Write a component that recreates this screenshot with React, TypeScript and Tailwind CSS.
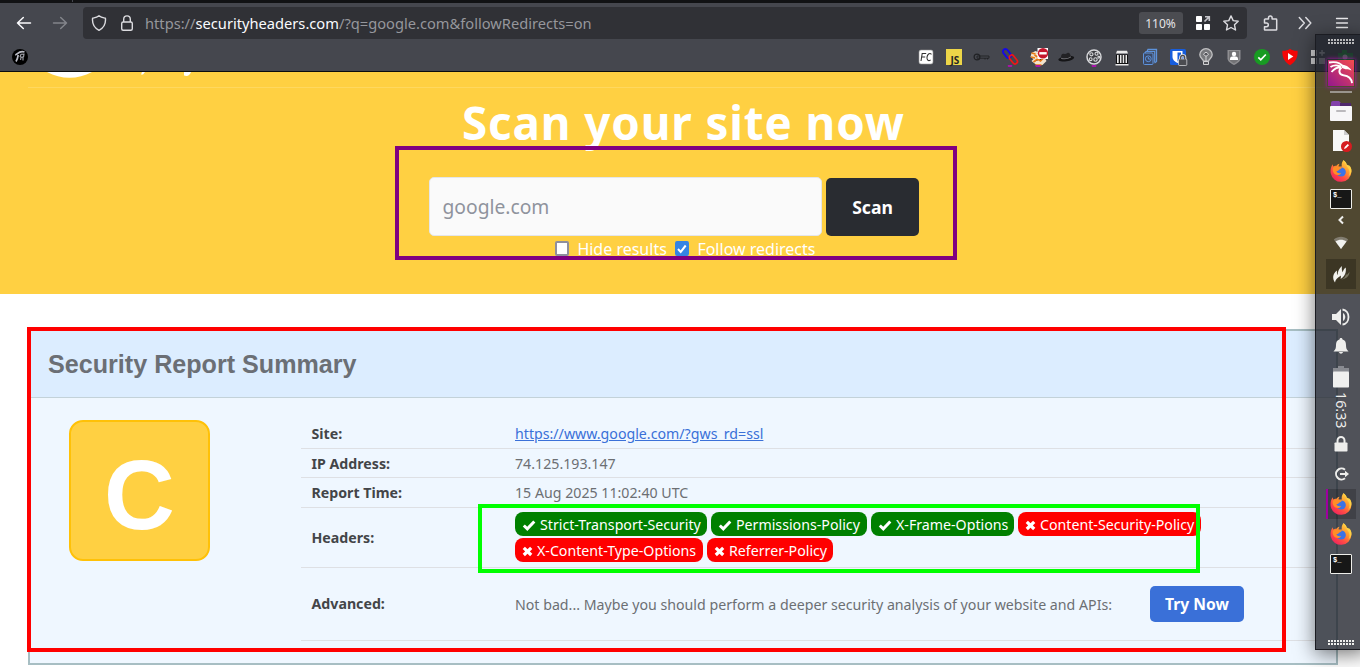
import React from "react";

type IconProps = { className?: string };

const Firefox = ({ className = "" }: IconProps) => (
  <svg viewBox="0 0 22 22" className={"block h-[22px] w-[22px] shrink-0 " + className}>
    <defs>
      <linearGradient id="fxBody" x1="0.85" y1="0.05" x2="0.2" y2="0.95">
        <stop offset="0" stopColor="#ffdf45" />
        <stop offset="0.4" stopColor="#ff9330" />
        <stop offset="0.7" stopColor="#ff4a45" />
        <stop offset="1" stopColor="#f0245e" />
      </linearGradient>
    </defs>
    <path d="M13.5.2c2 1.300 3 2.900 3.300 4.500 1 .3 1.800 1 2.300 2 .3-.5.300-1 .2-1.500 1.500 2 2.300 4.300 2.200 6.600A10.500 10.500 0 0 1 .7 13.300C.2 9.900 1 6.700 2.700 4.300c0 1 .3 1.600.6 2.100 1-.6 2-.8 3.100-.6C7.400 4.500 8.500 4 9.600 3.800c-.8.900-1.100 1.800-1 2.600h3.200c-.4-2.200.1-4.500 1.700-6.200Z" fill="url(#fxBody)" />
    <path d="M12.800.5c3.200 2.500 3.500 5.200 5.200 7.400 2.300 3.200 1.700 7-.2 9.200 4.600-3.200 4.600-9 1.300-11.500-.5-.6-1.400-.9-2.300-.9C16.300 3 15.200 1.400 13.500.2Z" fill="#ffd84a" opacity=".8" />
    <circle cx="11.200" cy="12" r="4.600" fill="#3b73e8" />
    <path d="M3 7.700c1.700-1.500 3.900-1.500 5.700-.8 1 .4 2.300.3 3.300.6-.2 1.200-1.900 1.700-2.900 2.200-.7 1-1.600 1.500-3 1.300 1.200 2.200 3.200 2.800 5.200 1.700-1.200 2.800-5.300 3.200-7.500.3C2.700 11.400 2.400 9.500 3 7.700Z" fill="#ff8e27" />
  </svg>
);

const Terminal = () => (
  <div className="h-[20px] w-[22px] rounded-[1px] border border-[#eeeeea] bg-[#171717] pl-[2px] font-['Liberation_Mono'] text-[7px] leading-[11px] font-bold text-white">
    $_
  </div>
);

const Grip = ({ className = "" }: IconProps) => (
  <svg viewBox="0 0 26 5" className={"block h-[5px] w-[26px] " + className}>
    {[0, 3, 6, 9, 12, 15, 18, 21, 24].map((x) => (
      <g key={x} fill="currentColor">
        <rect x={x} y="0" width="2" height="2" />
        <rect x={x} y="3" width="2" height="2" />
      </g>
    ))}
  </svg>
);

const Slot = ({ className = "", children }: { className?: string; children: React.ReactNode }) => (
  <div className={"flex w-[30px] shrink-0 items-center justify-center " + className}>{children}</div>
);

const Ext = ({ children }: { children: React.ReactNode }) => (
  <svg viewBox="0 0 20 20" className="block h-[20px] w-[20px]">{children}</svg>
);

function Toolbar() {
  return (
    <div className="flex h-[40px] items-center">
      <svg viewBox="0 0 16 16" fill="none" stroke="#fbfbfe" strokeWidth="1.500" strokeLinecap="round" strokeLinejoin="round" className="ml-[16px] h-[16px] w-[16px]">
        <path d="M14.500 8H1.500M7.300 2.500 1.500 8l5.800 5.500" />
      </svg>
      <svg viewBox="0 0 16 16" fill="none" stroke="#83858b" strokeWidth="1.500" strokeLinecap="round" strokeLinejoin="round" className="ml-[20px] h-[16px] w-[16px]">
        <path d="M1.500 8h13M8.700 2.500 14.500 8l-5.800 5.500" />
      </svg>
      <div className="ml-[15px] flex h-[32px] w-[1164px] items-center rounded-[4px] bg-[#303136]">
        <svg viewBox="0 0 16 16" fill="none" stroke="#dcdce0" strokeWidth="1.400" strokeLinejoin="round" className="ml-[8px] h-[16px] w-[16px]">
          <path d="M8 .8c2 1.700 4.300 2 6.400 2.400C15 8.700 12.600 13 8 15.300 3.400 13 1 8.700 1.600 3.200 3.700 2.800 6 2.500 8 .8Z" />
        </svg>
        <svg viewBox="0 0 16 16" fill="none" stroke="#dcdce0" strokeWidth="1.400" className="ml-[12px] h-[16px] w-[16px]">
          <rect x="2.700" y="7" width="10.600" height="8.300" rx="1.500" />
          <path d="M4.700 7V4.200a3.300 3.300 0 0 1 6.600 0V7" />
        </svg>
        <div className="ml-[10px] font-['Noto_Sans'] text-[14.670px] leading-[20px] whitespace-nowrap text-[#96979c]">
          https://<span className="text-[#fbfbfe]">securityheaders.com</span>/?q=google.com&amp;followRedirects=on
        </div>
        <div className="mr-[12px] ml-auto h-[22px] w-[44px] rounded-[3px] bg-[#4b4c51] pr-[1px] text-center font-['Noto_Sans'] text-[12px] leading-[23px] text-[#e4e4e6]">
          110%
        </div>
        <svg viewBox="0 0 16 16" className="mr-[12px] h-[16px] w-[16px]">
          <g fill="#fff">
            <rect x="1" y="1" width="6" height="6" rx=".8" />
            <rect x="1" y="9" width="6" height="6" rx=".8" />
            <rect x="9" y="9" width="6" height="6" rx=".8" />
          </g>
          <path d="M9.500 6.500 14 2M10 1.700h4.300V6" fill="none" stroke="#c5c5ca" strokeWidth="1.600" />
        </svg>
        <svg viewBox="0 0 16 16" fill="none" stroke="#dcdce0" strokeWidth="1.400" strokeLinejoin="round" className="mr-[8px] h-[16px] w-[16px]">
          <path d="m8 .9 2.200 4.700 5 .6-3.700 3.600 1 5.200L8 12.500 3.500 15l1-5.200L.8 6.200l5-.6Z" />
        </svg>
      </div>
      <svg viewBox="0 0 16 16" fill="none" stroke="#dcdce0" strokeWidth="1.500" strokeLinejoin="round" className="ml-[16px] h-[16px] w-[16px]">
        <path d="M1.500 8V4.700a.7.7 0 0 1 .7-.7h3.300V2.700a1.800 1.800 0 0 1 3.600 0V4H13a.7.7 0 0 1 .7.700v9.700a.7.7 0 0 1-.7.700H2.200a.7.7 0 0 1-.7-.7v-2.700h2a1.800 1.800 0 0 0 0-3.700Z" />
      </svg>
      <svg viewBox="0 0 16 16" fill="none" stroke="#dcdce0" strokeWidth="1.500" strokeLinecap="round" strokeLinejoin="round" className="ml-[18px] h-[16px] w-[16px]">
        <path d="m2.300 2.500 5 5.500-5 5.500M8.800 2.500l5 5.500-5 5.500" />
      </svg>
      <svg viewBox="0 0 16 16" fill="none" stroke="#e8e8ea" strokeWidth="1.300" strokeLinecap="round" className="ml-[21px] h-[16px] w-[16px]">
        <path d="M2.500 3.500h11M2.500 8h11M2.500 12.500h11" />
      </svg>
    </div>
  );
}

function Extensions() {
  return (
    <div className="flex h-[28px] items-center">
      <svg viewBox="0 0 16 16" className="ml-[12px] h-[16px] w-[16px]">
        <circle cx="8" cy="8" r="8" fill="#000" />
        <path d="M3.200 6c1.200-.2 2.500-1.800 4-2.600 2-.9 3.800-.9 5.300-.4M4 12.500c1-1.500 1.700-3.500 2.200-6.500" fill="none" stroke="#b9bbc4" strokeWidth="1.700" />
        <path d="M8 8 9 5.200l3-.2-.4 2.700-2.600.5-.4 2.800M11 8v3.500" fill="none" stroke="#a3a5ad" strokeWidth="1.100" />
      </svg>
      <div className="ml-[888px] flex gap-[8px]">
        <Ext>
          <rect x="3" y="3" width="14" height="14" rx="2" fill="#fff" stroke="#999" strokeWidth=".6" />
          <path d="M5 14 6.200 6.500h4M5.500 10h3.700M15.500 7.300c-2-2-4.200.2-4.500 2.800-.4 3 1.600 4.400 3.600 2.700" fill="none" stroke="#333" strokeWidth="1.100" />
        </Ext>
        <Ext>
          <rect x="2" y="2" width="16" height="16" fill="#edd648" />
          <text x="6.500" y="16.800" fontFamily="Noto Sans" fontWeight="700" fontSize="10" fill="#252525">JS</text>
        </Ext>
        <Ext>
          <circle cx="5" cy="10" r="2.900" fill="none" stroke="#202124" strokeWidth="1.200" />
          <path d="M5 9h12v2.200H5ZM13 11v1.500M15.500 11v1.500" fill="none" stroke="#202124" strokeWidth=".9" />
        </Ext>
        <Ext>
          <rect x="4.500" y="1.500" width="5" height="10" rx="2.500" fill="none" stroke="#1508e8" strokeWidth="1.900" transform="rotate(-38 7 6.500)" />
          <rect x="11" y="7.500" width="4.800" height="10" rx="2.400" fill="none" stroke="#f01616" strokeWidth="1.700" transform="rotate(-38 13.400 12.500)" />
          <path d="M7.800 18h4.400v1.500L10 21l-2.200-1.500Z" fill="#a813a8" />
        </Ext>
        <Ext>
          <g transform="translate(1.500 0)">
            <path d="M2 6 6 4l7 3 4 7-4 4H7l-5-4 2-2-3-2Z" fill="#f3e3cc" />
            <path d="m2 6 4 1M1.500 10l4 1M4 15l4-3 3 2 3-3M6 18l6 0M5 8l3 2" stroke="#e87912" strokeWidth="1.600" />
            <rect x="8" y="1" width="12" height="11" fill="#fff" />
            <circle cx="13.500" cy="6.300" r="5.200" fill="#c5172e" />
            <rect x="9.800" y="5.100" width="7.400" height="2.400" fill="#fff" />
          </g>
          <path d="M7.500 18h5v1.500L10 21l-2.500-1.500Z" fill="#a813a8" />
        </Ext>
        <Ext>
          <g transform="rotate(-8 10 10)">
            <ellipse cx="10" cy="11.700" rx="8" ry="2.600" fill="#151517" />
            <path d="M5 11c0-3 .8-5 3-4.500 1.500.4 2.300.4 4-.3 2-.4 2.800 2 3 4.800Z" fill="#222225" />
            <path d="M5 10.600c3 1.400 7 1.300 10 0" stroke="#6e6e73" fill="none" />
          </g>
        </Ext>
        <Ext>
          <circle cx="10" cy="10" r="7" fill="#3c3d42" stroke="#d7d8db" strokeWidth="1.500" />
          <g fill="#3c3d42" stroke="#d7d8db" strokeWidth="1.100"><circle cx="7.400" cy="7.300" r="1.600" /><circle cx="12.500" cy="6.800" r="1.500" /><circle cx="6.700" cy="12.200" r="1.400" /><circle cx="11.500" cy="12.500" r="1.700" /><circle cx="14.800" cy="10.200" r=".9" /></g>
          <path d="M7.700 18h4.600v1.500L10 21l-2.300-1.500Z" fill="#a813a8" />
        </Ext>
        <Ext>
          <path d="M4 7.500h12v9.500H4Z" fill="#111" />
          <path d="M4 6.500 5 3.700h10l1 2.800ZM3.500 17h13v1.500h-13ZM5 8h1.700v8H5ZM8 8h1.500v8H8ZM10.700 8h1.500v8h-1.500ZM13.500 8H15v8h-1.500Z" fill="#e8e8e8" />
        </Ext>
        <Ext>
          <path d="M7 4.500 8 2.500h8.500v12L14.500 16" fill="none" stroke="#5e93dc" strokeWidth="1.300" />
          <path d="M5 6 6 4.500h8.700V15" fill="none" stroke="#5e93dc" strokeWidth="1.200" />
          <rect x="3.500" y="6" width="9.500" height="11.500" rx="1" fill="#3c4a66" stroke="#5e93dc" />
          <circle cx="8.300" cy="11.800" r="2.900" fill="none" stroke="#5e93dc" /><path d="M8.300 10v2h1.800" fill="none" stroke="#5e93dc" />
        </Ext>
        <Ext>
          <rect x="2" y="2" width="16" height="16" rx="1.500" fill="#175ddc" />
          <path d="M4.500 4h10v6c0 3-2.500 4.700-5 6-2.500-1.300-5-3-5-6Z" fill="#fff" /><path d="M9.500 5.500h3.500v5c0 1.700-1.700 3-3.500 4Z" fill="#175ddc" />
          <path d="M12.500 12.500v-2a2.200 2.200 0 0 1 4.400 0v2" fill="none" stroke="#e4e4e6" strokeWidth="2.800" />
          <rect x="10.500" y="12" width="8.300" height="6.500" rx="1" fill="#4b4c51" stroke="#e4e4e6" strokeWidth=".7" /><path d="M12.700 12.500v-2a2 2 0 0 1 4 0v2" fill="none" stroke="#4b4c51" strokeWidth="1.300" />
        </Ext>
        <Ext>
          <path d="M7.500 14.200C7.300 12 3.800 11 3.800 7.800a6.200 6.200 0 0 1 12.400 0c0 3.200-3.500 4.200-3.700 6.400Z" fill="#77787b" stroke="#c0c0c2" strokeWidth="1.300" />
          <path d="m7.500 7.500 2.500 1.800 2.500-1.800L11 5.500H9ZM10 9v5M7.500 14.500h5v3h-5Z" fill="#55565b" stroke="#d0d0d2" strokeWidth="1" />
        </Ext>
        <Ext>
          <path d="M3.500 3h13v8.500c0 3-3.500 5-6.500 6.500-3-1.500-6.500-3.500-6.500-6.500Z" fill="#8e8e91" />
          <path d="M5 4h10v7c0 2.500-2.700 4.300-5 5.500-2.300-1.200-5-3-5-5.500Z" fill="#737376" />
          <circle cx="10" cy="7" r="2.200" fill="#fff" /><path d="M6 13v-1.500c0-3 8-3 8 0V13Z" fill="#fff" />
        </Ext>
        <Ext>
          <circle cx="10" cy="10" r="8" fill="#189b22" /><path d="m6.300 10.300 2.500 2.500 5-5.300" fill="none" stroke="#fff" strokeWidth="1.700" />
        </Ext>
        <Ext>
          <path d="M10 1.800C12 3.500 15 4 17.600 3.800c.5 6.200-2.200 11.400-7.600 14.400C4.600 15.200 1.900 10 2.400 3.800 5 4 8 3.500 10 1.800Z" fill="#f40707" /><path d="m8 6 5.300 3.500L8 13Z" fill="#fff" />
        </Ext>
        <Ext>
          <path d="M3 3h6v6H3Zm0 8h6v6H3Zm8 0h6v6h-6ZM13.300 3h1.500v2h2v1.700h-2v2h-1.500v-2h-2V5h2Z" fill="#d8d8da" />
        </Ext>
        <Ext>
          <path d="M2 6h4V3h5v3h6v12H2Z" fill="#0aa82e" /><circle cx="9" cy="10" r="2.500" fill="#fff" />
        </Ext>
      </div>
    </div>
  );
}

const Row = ({ label, className, labelClass = "", children }: { label: string; className: string; labelClass?: string; children: React.ReactNode }) => (
  <div className={"flex items-center border-b border-[#dee0e4] " + className}>
    <div className={"w-[204px] shrink-0 pl-[10.500px] font-bold text-[#434548] " + labelClass}>{label}</div>
    <div className="flex-1 pl-[10px]">{children}</div>
  </div>
);

const Pill = ({ ok, className, children }: { ok?: boolean; className: string; children: string }) => (
  <div className={"flex h-[24px] shrink-0 items-center rounded-[8px] pt-[1px] pl-[7px] whitespace-nowrap text-white " + (ok ? "bg-[#008000] " : "bg-[#ff0000] ") + className}>
    {ok ? (
      <svg viewBox="0 0 14 12" className="mr-[4px] h-[12px] w-[14px] shrink-0"><path d="m1.800 6.500 3.500 3.300 7-7.300" fill="none" stroke="#fff" strokeWidth="3" /></svg>
    ) : (
      <svg viewBox="0 0 11 12" className="mr-[4px] h-[12px] w-[11px] shrink-0"><path d="m1.800 2.800 7.400 7.200M9.200 2.800 1.800 10" fill="none" stroke="#fff" strokeWidth="3.200" /></svg>
    )}
    <span>{children}</span>
  </div>
);

function Report() {
  return (
    <div className="mt-[35px] ml-[28px] h-[336px] w-[1310px] border-2 border-[#a7bec3] bg-[#eff7ff]">
      <div className="flex h-[67px] items-center border-b border-[#c3d2d9] bg-[#dcedff] pt-[2px] pl-[18px] font-['Liberation_Sans'] text-[25.140px] font-bold text-[#6b6f75]">
        Security Report Summary
      </div>
      <div className="flex font-['Noto_Sans'] text-[14.190px] leading-[21px] text-[#6c6f73]">
        <div className="mt-[22px] ml-[39px] flex h-[141px] w-[141px] shrink-0 items-center justify-center rounded-[14px] border-2 border-[#ffc107] bg-[#ffd042] pt-[8px] font-['Liberation_Sans'] text-[98px] leading-[98px] font-bold text-white">
          C
        </div>
        <div className="ml-[91px] w-[1017px] pt-[21px]">
          <Row label="Site:" className="h-[30px]">
            <span className="text-[#3a70d8] underline">https://www.google.com/?gws_rd=ssl</span>
          </Row>
          <Row label="IP Address:" className="h-[29px] pt-[1px]">74.125.193.147</Row>
          <Row label="Report Time:" className="h-[30px]">15 Aug 2025 11:02:40 UTC</Row>
          <Row label="Headers:" className="h-[60px]">
            <div className="mb-[1px] flex flex-col gap-[2px]">
              <div className="flex gap-[4px]">
                <Pill ok className="w-[192px]">Strict-Transport-Security</Pill>
                <Pill ok className="w-[156px]">Permissions-Policy</Pill>
                <Pill ok className="w-[143px]">X-Frame-Options</Pill>
                <Pill className="w-[183px]">Content-Security-Policy</Pill>
              </div>
              <div className="flex gap-[4px]">
                <Pill className="w-[188px]">X-Content-Type-Options</Pill>
                <Pill className="w-[126px]">Referrer-Policy</Pill>
              </div>
            </div>
          </Row>
          <Row label="Advanced:" className="h-[73px]" labelClass="pb-[2px]">
            <div className="flex items-center">
              <span className="w-[635px] whitespace-nowrap">Not bad... Maybe you should perform a deeper security analysis of your website and APIs:</span>
              <button className="h-[36px] w-[94px] rounded-[5px] bg-[#3a70d8] pt-[1px] text-[15.700px] font-bold text-white">Try Now</button>
            </div>
          </Row>
        </div>
      </div>
    </div>
  );
}

function Dock() {
  return (
    <div className="absolute top-[34px] left-[1315px] flex h-[616px] w-[52px] flex-col items-start border border-[#1b1c22] bg-[rgba(33,35,44,0.79)] pl-[10px] text-[#eeeeec] shadow-[0_4px_20px_rgba(0,0,0,0.55)]">
      <Slot className="h-[12px]"><Grip className="text-[#b8b8ba]" /></Slot>
      <Slot className="mt-[12px] h-[28px]">
        <svg viewBox="0 0 28 28" className="h-[28px] w-[28px] shadow-[0_0_4px_#b010b0]">
          <defs><linearGradient id="kali" x1="0" y1="1" x2="1" y2="0"><stop offset="0" stopColor="#93188e" /><stop offset="1" stopColor="#f44c4e" /></linearGradient></defs>
          <rect x="1" y="1" width="26" height="26" fill="url(#kali)" />
          <path d="M2 3.500c6-1 11.500.3 14 4M3.500 8c3-2 7-2 10.500-.5M4.500 13c2.500-3 5.500-4.700 9.500-5M14.500 8.500c-3.500 3-2.500 7 2 7.700 5 .6 8 2.300 8.500 8" fill="none" stroke="#fff" strokeWidth="1.900" />
          <path d="M14 5.500c4 .3 8.500 2 10.500 6-2.500-1.300-4-1.500-6-1.300L15 9Z" fill="#fff" />
        </svg>
      </Slot>
      <Slot className="mt-[4px] h-[2px]"><div className="h-[2px] w-[22px] bg-[#99958c]" /></Slot>
      <Slot className="mt-[7px] h-[22px]">
        <svg viewBox="0 0 22 22" className="h-[22px] w-[22px]"><path d="M1 9V3q0-2 2-2h6l2 2h10v6Z" fill="#8240ab" /><path d="M10 3h11v3H10Z" fill="#4f286d" /><rect y="6" width="22" height="15" rx="1" fill="#f7f6f8" /><rect x="6" y="10" width="10" height="2" rx="1" fill="#bbb9bd" /></svg>
      </Slot>
      <Slot className="mt-[8px] h-[22px]">
        <svg viewBox="0 0 22 22" className="h-[22px] w-[22px]"><path d="M3 0h11l5 5v16H3Z" fill="#f8f8f7" /><path d="M14 0v5h5" fill="#ccc" /><circle cx="16.500" cy="16.500" r="5.500" fill="#d51c20" /><path d="m14 19 .7-2 3-3 1.300 1.300-3 3Z" fill="#fff" /></svg>
      </Slot>
      <Slot className="mt-[7px] h-[24px]"><Firefox /></Slot>
      <Slot className="mt-[5px] h-[22px]"><Terminal /></Slot>
      <Slot className="mt-[5px] h-[10px]"><svg viewBox="0 0 8 10" className="h-[10px] w-[8px]"><path d="M6 1.500 2.500 5 6 8.500" fill="none" stroke="#eeeeec" strokeWidth="2" /></svg></Slot>
      <Slot className="mt-[10px] h-[16px]"><svg viewBox="0 0 16 16" className="h-[16px] w-[16px]"><path d="M.8 4.500C5 .8 11 .8 15.200 4.500L8 14Z" fill="#817c70" /><path d="M2.500 6.500c3.500-2.500 7.500-2.500 11 0L8 14Z" fill="#f2f2ef" /></svg></Slot>
      <Slot className="mt-[8px] h-[30px] bg-black/25">
        <svg viewBox="0 0 18 18" className="mb-[1px] h-[18px] w-[18px]">
          <path d="M9 14.500c3-.8 5-3 5-6.500 0 1 .5 1.500.7 2C16 9 17 7.800 17.500 6.500c0 5-3.500 7.500-8.500 8Z" fill="#77745f" />
          <path d="M3 17.500C.2 13.500.5 9 5 5.500c-.3 2 0 3.500.7 4.500C5.500 6.500 7 3.500 10 1c-.6 3 0 5 .8 6.300C11 5.500 12 3.800 13.700 2.500c.8 4.500-.7 9-5.200 11.500C9 12.500 9 11.500 8.700 10.500 8 12 4 12.500 3 17.500Z" fill="#f2f2ee" />
        </svg>
      </Slot>
      <Slot className="mt-[19px] h-[18px]"><svg viewBox="0 0 18 18" className="h-[18px] w-[18px]"><path d="M0 6h4l5-5v16l-5-5H0Z" fill="currentColor" /><path d="M11 5c3 2 3 6 0 8Z" fill="currentColor" /><path d="M10.500 1.500c8 1 8 14 0 15" fill="none" stroke="currentColor" strokeWidth="1.800" /></svg></Slot>
      <Slot className="mt-[12px] h-[16px]"><svg viewBox="0 0 16 16" className="h-[16px] w-[16px]"><path d="M8 0c1 0 1.500.7 1.500 1.500C12 2 13 4 13 7c0 3 .5 4.500 2.500 6.500H.5C2.500 11.500 3 10 3 7c0-3 1-5 3.500-5.500C6.500.7 7 0 8 0ZM6 14h4c-.5 2.200-3.500 2.200-4 0Z" fill="currentColor" /></svg></Slot>
      <Slot className="mt-[12px] h-[22px]"><svg viewBox="0 0 16 22" className="h-[22px] w-[16px]"><path d="M5 0h6v2H5ZM0 2h16v4H0Z" fill="#898b91" /><rect y="5.500" width="16" height="16" rx=".8" fill="#f0f0ef" /></svg></Slot>
      <div className="mt-[3px] ml-[1px] flex h-[38px] w-[28px] shrink-0 items-center justify-center font-['Noto_Sans'] text-[14.300px] leading-[28px] [writing-mode:vertical-rl]">16:33</div>
      <Slot className="mt-[7px] h-[16px]"><svg viewBox="0 0 16 16" className="h-[16px] w-[16px]"><rect x="1.500" y="6.500" width="13" height="9" rx=".8" fill="currentColor" /><path d="M4.500 7V4.500a3.500 3.500 0 0 1 7 0V7" fill="none" stroke="currentColor" strokeWidth="2" /></svg></Slot>
      <Slot className="mt-[14px] h-[16px]"><svg viewBox="0 0 16 16" className="h-[16px] w-[16px]"><path d="M12 3.700a5.500 5.500 0 1 0 0 8.600M7 8h6" fill="none" stroke="currentColor" strokeWidth="2" /><path d="m12 4.700 4 3.300-4 3.300Z" fill="currentColor" /></svg></Slot>
      <Slot className="mt-[7px] h-[30px] border-l-2 border-[#a000a0] bg-black/20 pr-[2px]"><Firefox /></Slot>
      <Slot className="mt-[4px] h-[22px]"><Firefox /></Slot>
      <Slot className="mt-[8px] h-[22px]"><Terminal /></Slot>
      <Slot className="mt-[65px] h-[5px]"><Grip /></Slot>
    </div>
  );
}

export default function App() {
  return (
    <div className="relative h-[667px] w-[1360px] overflow-hidden bg-white">
      <div className="h-[72px] border-b border-[#0b0c0e] bg-[#45474e]">
        <div className="h-[3px] bg-[#111214]"><div className="ml-[72px] h-[2px] w-px bg-[#45474e]" /></div>
        <Toolbar />
        <Extensions />
      </div>

      <div className="h-[222px] overflow-hidden bg-[#ffd042] font-['Noto_Sans']">
        <div className="flex h-[15px] pl-[47px]">
          <svg viewBox="0 0 150 8" className="h-[8px] w-[150px]">
            <path d="M0 0h45C31 7.700 14 7.700 0 0ZM95 0h3l-2 2.500h-2ZM137 0h7c-1 3-3 4.800-7 3.600V1.200Z" fill="#fff" />
          </svg>
        </div>
        <div className="ml-[28px] h-px bg-[#ffd85f]" />
        <h1 className="mt-[4px] ml-[462px] h-[60px] text-[45.760px] leading-[60px] font-bold tracking-[0.880px] whitespace-nowrap text-white">Scan your site now</h1>
        <div className="mt-[25px] ml-[429px] flex h-[59px] items-end gap-[4px]">
          <div className="flex h-[59px] w-[393px] items-center rounded-[5px] border border-[#e4e6ea] bg-[#fafafa] pt-[1px] pl-[12.500px] text-[19.250px] text-[#8f939d]">google.com</div>
          <button className="h-[58px] w-[93px] rounded-[5px] bg-[#292c31] text-[17.600px] font-bold text-white">Scan</button>
        </div>
        <div className="mt-[2px] ml-[555.400px] flex h-[22px] items-center text-[16px] leading-[22px] whitespace-nowrap text-white">
          <div className="mb-[1px] h-[15px] w-[14px] rounded-[2px] border-2 border-[#8f8f9d] bg-white" />
          <span className="ml-[8px] w-[98px]">Hide results</span>
          <svg viewBox="0 0 14 14" preserveAspectRatio="none" className="mb-[1px] h-[15px] w-[14px]"><rect width="14" height="14" rx="2" fill="#3584e4" /><path d="m3 7.500 2.700 2.700 5-6" fill="none" stroke="#fff" strokeWidth="2" /></svg>
          <span className="ml-[8px]">Follow redirects</span>
        </div>
      </div>

      <Report />

      <div className="absolute top-[146px] left-[395px] h-[114px] w-[562px] border-4 border-[#800080]" />
      <div className="absolute top-[504px] left-[478px] h-[69px] w-[722px] border-4 border-[#00ff00]" />
      <div className="absolute top-[327px] left-[27px] h-[325px] w-[1259px] border-4 border-[#ff0000]" />
      <Dock />
    </div>
  );
}
